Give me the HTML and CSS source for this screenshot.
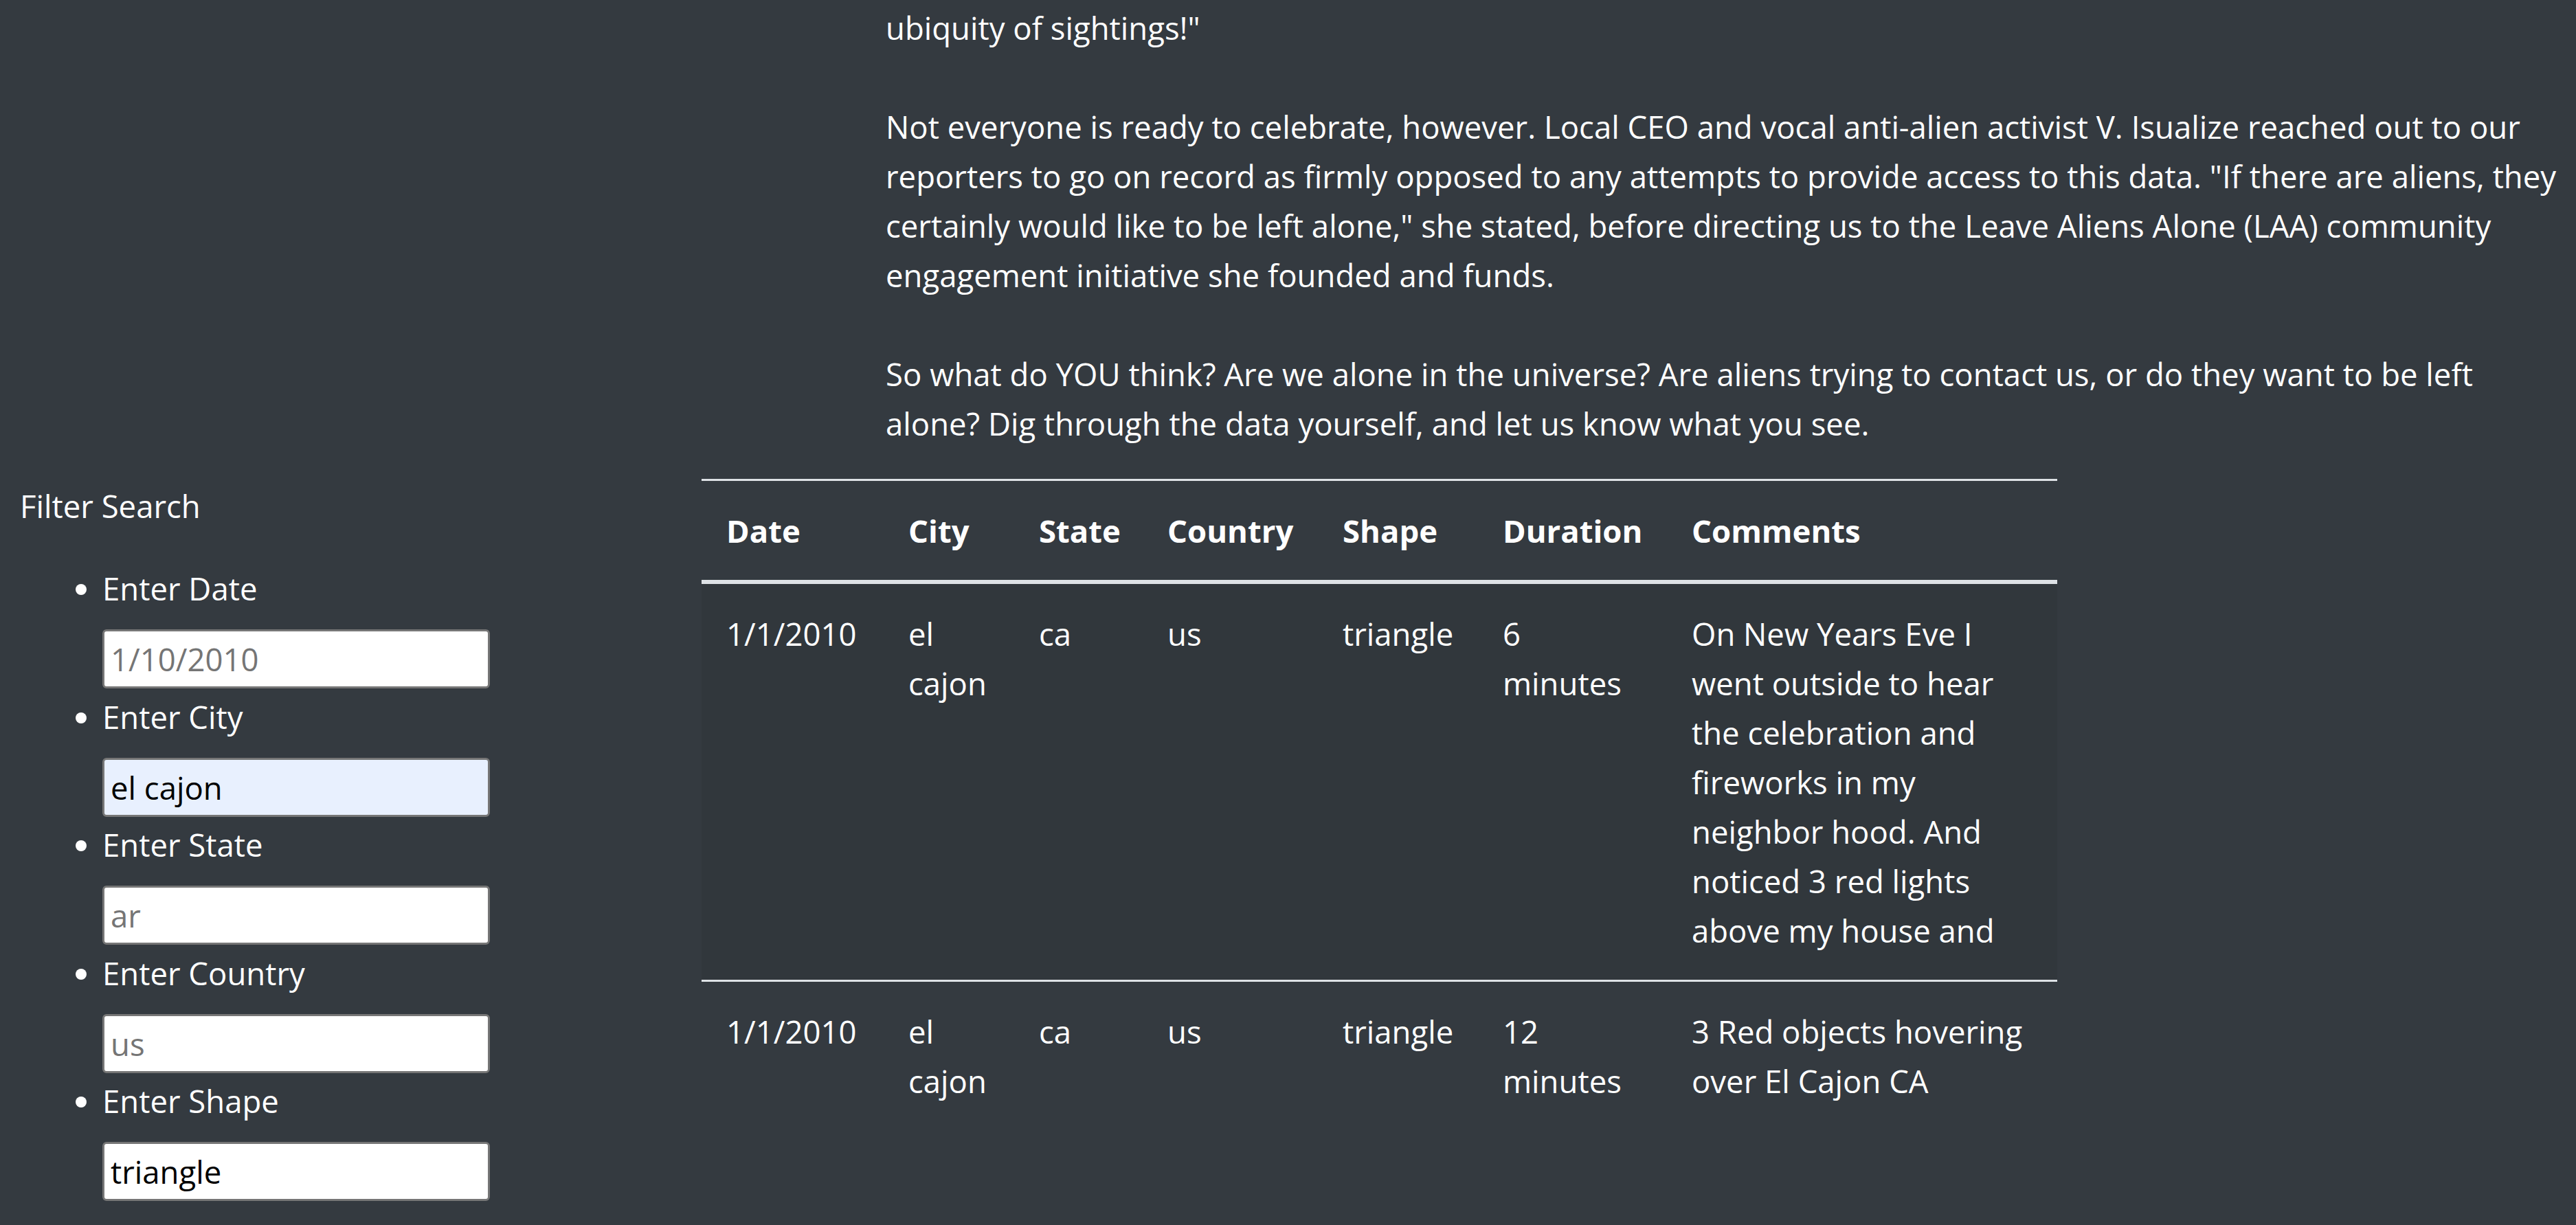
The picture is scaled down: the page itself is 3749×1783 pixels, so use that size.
FILE: index.html
```html
<!DOCTYPE html>
<html lang="en">
<head>
<meta charset="utf-8">
<title>UFO Sightings</title>
<link rel="stylesheet" href="styles.css">
</head>
<body>
<div class="intro">
  <p class="intro-p">ubiquity of sightings!"</p>
  <p class="intro-p">Not everyone is ready to celebrate, however. Local CEO and vocal anti-alien activist V. Isualize reached out to our<br>reporters to go on record as firmly opposed to any attempts to provide access to this data. "If there are aliens, they<br>certainly would like to be left alone," she stated, before directing us to the Leave Aliens Alone (LAA) community<br>engagement initiative she founded and funds.</p>
  <p class="intro-p last">So what do YOU think? Are we alone in the universe? Are aliens trying to contact us, or do they want to be left<br>alone? Dig through the data yourself, and let us know what you see.</p>
</div>

<div class="main-row">
  <aside class="sidebar">
    <p class="filter-title">Filter Search</p>
    <ul class="filters">
      <li class="filter-item">
        <label class="filter-label" for="datetime">Enter Date</label>
        <input class="filter-input" id="datetime" type="text" placeholder="1/10/2010">
      </li>
      <li class="filter-item">
        <label class="filter-label" for="city">Enter City</label>
        <input class="filter-input autofilled" id="city" type="text" value="el cajon">
      </li>
      <li class="filter-item">
        <label class="filter-label" for="state">Enter State</label>
        <input class="filter-input" id="state" type="text" placeholder="ar">
      </li>
      <li class="filter-item">
        <label class="filter-label" for="country">Enter Country</label>
        <input class="filter-input" id="country" type="text" placeholder="us">
      </li>
      <li class="filter-item">
        <label class="filter-label" for="shape">Enter Shape</label>
        <input class="filter-input" id="shape" type="text" value="triangle">
      </li>
    </ul>
  </aside>

  <section class="table-wrap">
    <table class="ufo-table">
      <thead>
        <tr>
          <th class="col-date">Date</th>
          <th class="col-city">City</th>
          <th class="col-state">State</th>
          <th class="col-country">Country</th>
          <th class="col-shape">Shape</th>
          <th class="col-duration">Duration</th>
          <th class="col-comments">Comments</th>
        </tr>
      </thead>
      <tbody>
        <tr>
          <td>1/1/2010</td>
          <td>el cajon</td>
          <td>ca</td>
          <td>us</td>
          <td>triangle</td>
          <td>6 minutes</td>
          <td>On New Years Eve I went outside to hear the celebration and fireworks in my neighbor hood. And noticed 3 red lights above my house and</td>
        </tr>
        <tr>
          <td>1/1/2010</td>
          <td>el cajon</td>
          <td>ca</td>
          <td>us</td>
          <td>triangle</td>
          <td>12 minutes</td>
          <td>3 Red objects hovering over El Cajon CA</td>
        </tr>
      </tbody>
    </table>
  </section>
</div>
</body>
</html>
```
FILE: styles.css
```css
html, body {
  margin: 0;
  padding: 0;
}

body {
  background: #343a40;
  color: #ffffff;
  font-family: "Open Sans", "Noto Sans", sans-serif;
  font-size: 45.5px;
  line-height: 72px;
  overflow: hidden;
}

*, *::before, *::after {
  box-sizing: border-box;
}

/* Intro article text */
.intro {
  padding: 4px 0 0 1289px;
}

.intro-p {
  margin: 0 0 72px 0;
  white-space: nowrap;
}

.intro-p.last {
  margin-bottom: 45px;
}

/* Main row */
.main-row {
  display: flex;
  align-items: flex-start;
}

.sidebar {
  flex: 0 0 1021px;
  padding: 3px 0 0 29px;
}

.filter-title {
  margin: 0 0 48px 0;
}

.filters {
  margin: 0;
  padding: 0 0 0 120px;
  list-style: disc;
}

.filter-label {
  display: block;
  height: 72px;
}

.filter-input {
  display: block;
  width: 564px;
  height: 86px;
  margin: 24px 0 4.5px 0;
  padding: 0 9px;
  border: 3px solid #767676;
  border-radius: 6px;
  background: #ffffff;
  color: #000000;
  font-family: inherit;
  font-size: 45.5px;
  line-height: normal;
  outline: none;
}

.filter-input::placeholder {
  color: #757575;
  opacity: 1;
}

.filter-input.autofilled {
  background: #e8f0fe;
}

/* Table */
.table-wrap {
  flex: 0 0 1973px;
}

.ufo-table {
  width: 1973px;
  table-layout: fixed;
  border-collapse: collapse;
  color: #ffffff;
}

.ufo-table th,
.ufo-table td {
  padding: 36px;
  text-align: left;
  vertical-align: top;
  border-top: 3px solid #dee2e6;
}

.ufo-table th {
  font-weight: 700;
  vertical-align: bottom;
  border-bottom: 6px solid #dee2e6;
}

.ufo-table tbody tr:nth-of-type(odd) {
  background-color: rgba(0, 0, 0, 0.05);
}

.ufo-table tbody tr:last-child td {
  border-bottom: 0;
}

.col-date { width: 265px; }
.col-city { width: 190px; }
.col-state { width: 187px; }
.col-country { width: 255px; }
.col-shape { width: 233px; }
.col-duration { width: 275px; }
.col-comments { width: 568px; }
```
